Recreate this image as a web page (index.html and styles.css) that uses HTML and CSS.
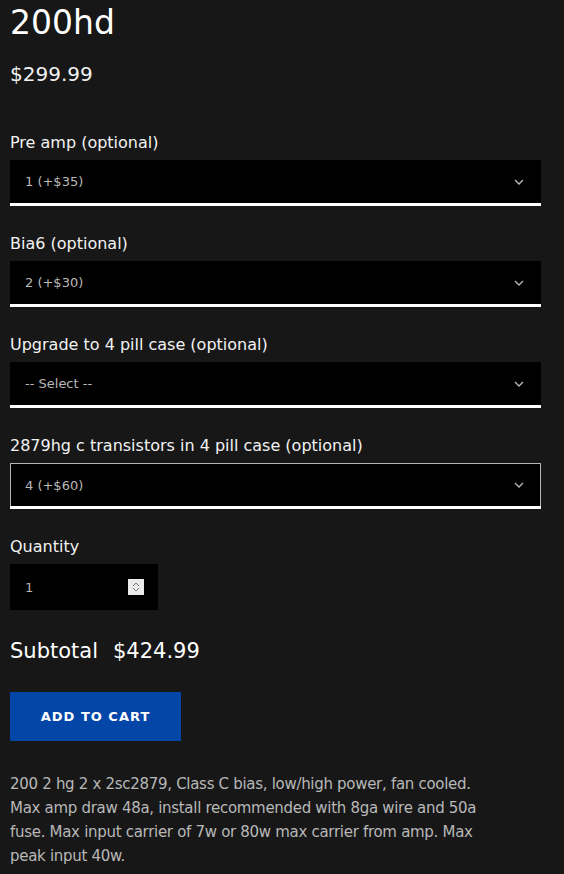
FILE: index.html
```html
<!DOCTYPE html>
<html>
<head>
<meta charset="utf-8">
<link rel="stylesheet" href="styles.css">
</head>
<body>
<div class="product">
  <h1 class="title">200hd</h1>
  <div class="price">$299.99</div>

  <div class="field">
    <label class="label">Pre amp (optional)</label>
    <div class="select"><span>1 (+$35)</span><svg class="chev" viewBox="0 0 10 6" width="10" height="6"><path d="M1 1 L5 5 L9 1" fill="none" stroke="#bbb" stroke-width="1.3"/></svg></div>
  </div>
  <div class="field">
    <label class="label">Bia6 (optional)</label>
    <div class="select"><span>2 (+$30)</span><svg class="chev" viewBox="0 0 10 6" width="10" height="6"><path d="M1 1 L5 5 L9 1" fill="none" stroke="#bbb" stroke-width="1.3"/></svg></div>
  </div>
  <div class="field">
    <label class="label">Upgrade to 4 pill case (optional)</label>
    <div class="select"><span>-- Select --</span><svg class="chev" viewBox="0 0 10 6" width="10" height="6"><path d="M1 1 L5 5 L9 1" fill="none" stroke="#bbb" stroke-width="1.3"/></svg></div>
  </div>
  <div class="field">
    <label class="label">2879hg c transistors in 4 pill case (optional)</label>
    <div class="select focused"><span>4 (+$60)</span><svg class="chev" viewBox="0 0 10 6" width="10" height="6"><path d="M1 1 L5 5 L9 1" fill="none" stroke="#bbb" stroke-width="1.3"/></svg></div>
  </div>

  <div class="field qty-field">
    <label class="label">Quantity</label>
    <div class="qty"><span class="qty-val">1</span><span class="spin"><svg viewBox="0 0 16 16" width="16" height="16"><path d="M5 7 L8 4 L11 7 M5 9 L8 12 L11 9" fill="none" stroke="#777" stroke-width="1"/></svg></span></div>
  </div>

  <div class="subtotal"><span>Subtotal</span><span>$424.99</span></div>

  <button class="cart">ADD TO CART</button>

  <p class="desc">200 2 hg 2 x 2sc2879, Class C bias, low/high power, fan cooled. Max amp draw 48a, install recommended with 8ga wire and 50a fuse. Max input carrier of 7w or 80w max carrier from amp. Max peak input 40w.</p>
</div>
</body>
</html>
```

FILE: styles.css
```css
* { box-sizing: border-box; }
html, body { margin: 0; padding: 0; }
body {
  background: #171717;
  color: #fff;
  font-family: "DejaVu Sans", "Open Sans", sans-serif;
}
.product {
  padding: 0 23px 0 10px;
  display: flex;
  flex-direction: column;
}
.title {
  margin: 3px 0 0;
  font-size: 33px;
  font-weight: 400;
  line-height: 40px;
}
.price {
  margin-top: 18px;
  font-size: 20px;
  line-height: 26px;
  color: #f2f2f2;
}
.field {
  display: flex;
  flex-direction: column;
  margin-top: 44px;
}
.field + .field { margin-top: 26px; }
.label {
  font-size: 16px;
  line-height: 24px;
  color: #f2f2f2;
  margin-bottom: 5px;
}
.select {
  height: 46px;
  background: #000;
  border-bottom: 3px solid #fff;
  display: flex;
  align-items: center;
  justify-content: space-between;
  padding: 0 17px 0 15px;
  font-size: 13px;
  color: #b8b8b8;
}
.select.focused {
  border: 1px solid #b5b5b5;
  border-bottom: 0;
  box-shadow: 0 3px 0 #fff;
  height: 43px;
  padding: 0 16px 0 14px;
  margin-bottom: 3px;
}
.chev { display: block; }
.field.qty-field { margin-top: 26px; }
.qty {
  width: 148px;
  height: 46px;
  background: #000;
  display: flex;
  align-items: center;
  justify-content: space-between;
  padding: 0 14px 0 15px;
  font-size: 13px;
  color: #b8b8b8;
}
.spin {
  width: 16px;
  height: 16px;
  background: #ebebeb;
  display: block;
}
.spin svg { display: block; }
.subtotal {
  margin-top: 27px;
  display: flex;
  gap: 15px;
  font-size: 21px;
  line-height: 28px;
}
.cart {
  margin-top: 27px;
  align-self: flex-start;
  width: 171px;
  height: 49px;
  background: #0445a8;
  border: 0;
  color: #fff;
  font-family: inherit;
  font-weight: 700;
  font-size: 13px;
  letter-spacing: 1px;
}
.desc {
  margin: 31px 0 0;
  max-width: 488px;
  font-size: 15px;
  letter-spacing: -0.3px;
  line-height: 24px;
  color: #b8b8b8;
}
```
